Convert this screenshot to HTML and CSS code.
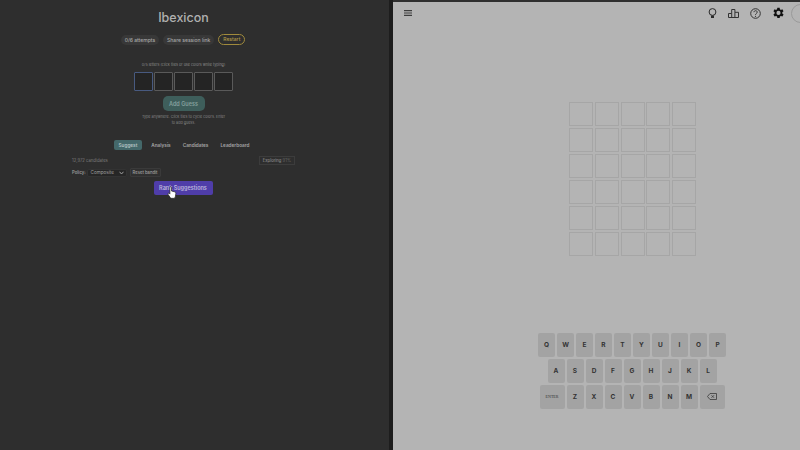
FILE: index.html
```html
<!DOCTYPE html>
<html lang="en">
<head>
  <meta charset="UTF-8">
  <title>Ibexicon</title>
  <link rel="stylesheet" href="styles.css">
</head>
<body>
<div class="split">
  <section class="solver">
    <div class="solver-col">
      <h1>Ibexicon</h1>
      <div class="pills">
        <span class="pill">0/6 attempts</span>
        <span class="pill">Share session link</span>
        <span class="pill restart">Restart</span>
      </div>
      <p class="letters-note">0/5 letters (click tiles or use colors while typing)</p>
      <div class="tiles">
        <div class="tile active"></div>
        <div class="tile"></div>
        <div class="tile"></div>
        <div class="tile"></div>
        <div class="tile"></div>
      </div>
      <button class="add-guess">Add Guess</button>
      <p class="hint">Type anywhere. Click tiles to cycle colors. Enter<br>to add guess.</p>
      <div class="tabs">
        <span class="tab on">Suggest</span>
        <span class="tab">Analysis</span>
        <span class="tab">Candidates</span>
        <span class="tab">Leaderboard</span>
      </div>
      <div class="stats">
        <span>12,972 candidates</span>
        <span class="exploring">Exploring <i>91%</i></span>
      </div>
      <div class="policy">
        <label>Policy:</label>
        <span class="select">Composite
          <svg width="5" height="4" viewBox="0 0 10 8"><path d="M1 1.500 5 6l4-4.500" fill="none" stroke="#aaa" stroke-width="1.800"/></svg>
        </span>
        <span class="reset">Reset bandit</span>
      </div>
      <button class="rank">Rank Suggestions</button>
    </div>
    <svg class="cursor" width="10" height="13" viewBox="0 0 10 13">
      <path d="M3 1c.7-.6 1.500-.2 1.500.7V5l3 .8c1 .3 1.500.9 1.300 1.900L8.300 11c-.1.8-.7 1.300-1.500 1.300H4.500c-.6 0-1-.3-1.300-.8L1 8.300c-.4-.7.5-1.500 1.200-.9l.7.7V1.700Z" fill="#fff" stroke="#222" stroke-width=".7"/>
    </svg>
  </section>

  <section class="game">
    <header class="game-bar">
      <svg class="menu" width="8" height="6" viewBox="0 0 8 6"><path d="M0 .6h8M0 3h8M0 5.400h8" stroke="#3d3d3d" stroke-width="1.100"/></svg>
      <div class="bar-icons">
        <svg width="9" height="11" viewBox="0 0 9 11"><circle cx="4.500" cy="4" r="3.400" fill="none" stroke="#2a2a2a" stroke-width="1"/><path d="M3 7.500h3V10H3z" fill="#2a2a2a"/></svg>
        <svg width="11" height="9" viewBox="0 0 11 9"><path d="M.5 8.500V4.500h3.200V.5h3.200v2.800h3.600v5.200Zm3.200 0v-4m3.200 4V3.300" fill="none" stroke="#333" stroke-width="1"/></svg>
        <svg width="11" height="11" viewBox="0 0 11 11"><circle cx="5.500" cy="5.500" r="4.800" fill="none" stroke="#333" stroke-width="1"/><path d="M3.900 4.200c.2-2 3.300-2 3.300 0 0 1.300-1.700 1.300-1.700 2.600" fill="none" stroke="#333" stroke-width="1"/><circle cx="5.500" cy="8.300" r=".6" fill="#333"/></svg>
        <svg width="13" height="13" viewBox="2 2 22 22"><path fill="#111" d="M19.400 13a7.500 7.500 0 0 0 0-2l2.100-1.600-2-3.500-2.500 1a7.500 7.500 0 0 0-1.700-1L15 3.200h-4l-.4 2.700a7.500 7.500 0 0 0-1.700 1l-2.500-1-2 3.500L6.500 11a7.500 7.500 0 0 0 0 2l-2.100 1.600 2 3.500 2.500-1a7.500 7.500 0 0 0 1.700 1l.4 2.700h4l.4-2.700a7.500 7.500 0 0 0 1.700-1l2.500 1 2-3.500ZM13 15.500a3.500 3.500 0 1 1 0-7 3.500 3.500 0 0 1 0 7Z"/></svg>
      </div>
      <span class="avatar"></span>
    </header>
    <div class="board" id="board"></div>
    <div class="keyboard">
      <div class="key-row">
        <span class="key">Q</span><span class="key">W</span><span class="key">E</span><span class="key">R</span><span class="key">T</span><span class="key">Y</span><span class="key">U</span><span class="key">I</span><span class="key">O</span><span class="key">P</span>
      </div>
      <div class="key-row">
        <span class="key">A</span><span class="key">S</span><span class="key">D</span><span class="key">F</span><span class="key">G</span><span class="key">H</span><span class="key">J</span><span class="key">K</span><span class="key">L</span>
      </div>
      <div class="key-row">
        <span class="key wide enter">ENTER</span><span class="key">Z</span><span class="key">X</span><span class="key">C</span><span class="key">V</span><span class="key">B</span><span class="key">N</span><span class="key">M</span>
        <span class="key wide">
          <svg width="10" height="7" viewBox="0 0 20 14"><path d="M6 1h13v12H6L1 7Z" fill="none" stroke="#3a3a3a" stroke-width="1.600"/><path d="m9 4.500 5 5m0-5-5 5" stroke="#3a3a3a" stroke-width="1.600"/></svg>
        </span>
      </div>
    </div>
  </section>
</div>
<script>
let board = document.getElementById('board');
for (let i = 0; i < 30; i++) {
  let c = document.createElement('div');
  c.className = 'cell';
  board.appendChild(c);
}
</script>
</body>
</html>
```
FILE: styles.css
```css
html, body { margin: 0; padding: 0; height: 100%; overflow: hidden; }
body { font-family: Inter, 'Liberation Sans', sans-serif; background: #1d1d1d; }
p, h1 { margin: 0; }
button { font-family: inherit; border: none; padding: 0; }

.split { display: flex; height: 450px; }

/* left panel */
.solver { position: relative; width: 389px; background: #2e2e2e; color: #aaa; padding-left: 72px; box-sizing: border-box; }
.solver-col { width: 223px; display: flex; flex-direction: column; align-items: center; }
h1 { font-size: 12.500px; font-weight: 500; line-height: 16px; margin-top: 10px; color: #b0b0b0; }
.pills { display: flex; gap: 4px; margin-top: 8px; align-items: center; margin-left: -1px; }
.pill { font-size: 5px; font-weight: 500; line-height: 10px; padding: 0 4px; border-radius: 5px; background: #383838; color: #a8a8a8; }
.restart { background: none; border: 1px solid #a08a3c; color: #b09a48; border-radius: 6px; line-height: 9px; }
.letters-note { font-size: 3.700px; line-height: 6px; margin-top: 17px; color: #8c8c8c; }
.tiles { display: flex; gap: 1px; margin-top: 4px; }
.tile { width: 17px; height: 17px; background: #242424; border: 1px solid #5a5a5a; border-radius: 1px; }
.tile.active { border-color: #485a80; }
.add-guess { width: 42px; height: 15px; margin-top: 5px; border-radius: 5px; background: #3e5e5b; color: #85a09d; font-size: 5.500px; font-weight: 600; }
.hint { font-size: 3.700px; line-height: 5.500px; margin-top: 3px; text-align: center; color: #858585; }
.tabs { display: flex; gap: 6px; margin-top: 15px; margin-left: -1px; }
.tab { font-size: 4.700px; font-weight: 600; line-height: 10px; padding: 0 3px; border-radius: 2px; color: #a6a6a6; }
.tab.on { background: #44686a; color: #b5c4c4; padding: 0 5px; }
.stats { width: 100%; display: flex; justify-content: space-between; align-items: center; margin-top: 6px; font-size: 4.200px; color: #7d7d7d; }
.exploring { border: 1px solid #3c3c3c; padding: 1px 3px; color: #9a9a9a; }
.exploring i { font-style: normal; color: #666; }
.policy { width: 100%; display: flex; align-items: center; gap: 1px; margin-top: 3px; font-size: 4.200px; color: #9a9a9a; }
.policy label { font-weight: 600; }
.select { width: 40px; height: 8px; box-sizing: border-box; display: flex; justify-content: space-between; align-items: center; padding: 0 2px 0 3px; background: #262626; border: 1px solid #333; border-radius: 2px; color: #a0a0a0; font-size: 4.600px; }
.reset { margin-left: 2px; padding: 1px 2px; background: #303030; border: 1px solid #3a3a3a; border-radius: 1px; color: #a0a0a0; font-weight: 500; }
.rank { width: 59px; height: 14px; margin-top: 4px; margin-left: -1px; border-radius: 2px; background: #4f3da9; color: #bdb7dd; font-size: 5.500px; font-weight: 600; }
.cursor { position: absolute; left: 167px; top: 186px; }

/* right panel */
.game { margin-left: 4px; width: 407px; background: #b4b4b4; border-top: 2px solid #2f2f2f; box-sizing: border-box; display: flex; flex-direction: column; align-items: center; }
.game-bar { width: 100%; height: 22px; box-sizing: border-box; display: flex; align-items: center; padding-left: 11px; position: relative; }
.bar-icons { margin-left: auto; margin-right: 15px; display: flex; align-items: center; gap: 11px; }
.avatar { position: absolute; right: -10px; top: 2px; width: 17px; height: 17px; border-radius: 50%; border: 1px solid #9a9a9a; }
.board { display: grid; grid-template-columns: repeat(5, 24px); grid-auto-rows: 24px; gap: 2px 1.800px; margin-top: 78px; margin-left: 72px; }
.cell { border: 1px solid #a6a6a6; box-sizing: border-box; }
.keyboard { display: flex; flex-direction: column; align-items: center; gap: 2.500px; margin-top: 77px; margin-left: 71px; }
.key-row { display: flex; gap: 2px; }
.key { width: 17px; height: 23.500px; display: flex; align-items: center; justify-content: center; background: #a3a3a3; border-radius: 2px; font-size: 6.500px; font-weight: 700; color: #333; }
.wide { width: 25px; }
.enter { font-size: 4px; font-family: 'Liberation Serif', serif; font-weight: 400; }
```
